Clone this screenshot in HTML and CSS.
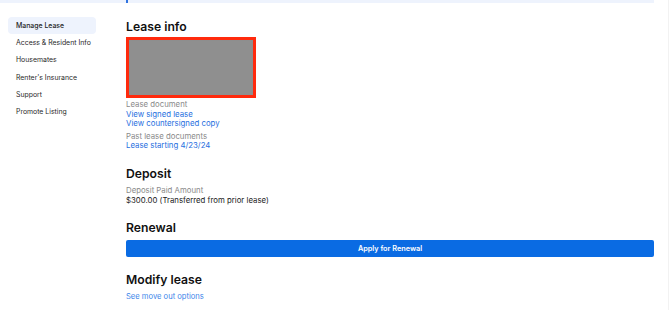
FILE: index.html
```html
<!DOCTYPE html>
<html>
<head>
<meta charset="utf-8">
<link rel="stylesheet" href="styles.css">
</head>
<body>
<div class="topbar"><span class="dot"></span></div>
<div class="page">
  <nav class="sidebar">
    <div class="nav-item active">Manage Lease</div>
    <div class="nav-item">Access &amp; Resident Info</div>
    <div class="nav-item">Housemates</div>
    <div class="nav-item">Renter's Insurance</div>
    <div class="nav-item">Support</div>
    <div class="nav-item">Promote Listing</div>
  </nav>
  <main class="main">
    <h2 class="heading first">Lease info</h2>
    <div class="lease-image"><div class="lease-image-inner"></div></div>
    <div class="group docs">
      <div class="label">Lease document</div>
      <a class="link">View signed lease</a>
      <a class="link">View countersigned copy</a>
    </div>
    <div class="group past">
      <div class="label">Past lease documents</div>
      <a class="link">Lease starting 4/23/24</a>
    </div>
    <h2 class="heading">Deposit</h2>
    <div class="group deposit">
      <div class="label">Deposit Paid Amount</div>
      <div class="value">$300.00 (Transferred from prior lease)</div>
    </div>
    <h2 class="heading">Renewal</h2>
    <button class="btn-primary">Apply for Renewal</button>
    <h2 class="heading">Modify lease</h2>
    <a class="link small">See move out options</a>
  </main>
</div>
</body>
</html>
```
FILE: styles.css
```css
html, body {
  margin: 0;
  padding: 0;
  background: #ffffff;
}
body {
  font-family: Inter, "Noto Sans", sans-serif;
  color: #1a1a1a;
  width: 670px;
  height: 310px;
  overflow: hidden;
  position: relative;
}
body::after {
  content: "";
  position: absolute;
  top: 0;
  right: 1px;
  width: 1px;
  height: 100%;
  background: #f2f2f2;
}
.topbar {
  width: 654px;
  height: 3px;
  background: #eef3fd;
  display: flex;
  padding-left: 126px;
  box-sizing: border-box;
}
.dot {
  width: 2px;
  height: 3px;
  background: #2f73e0;
}
.page {
  display: flex;
  gap: 30px;
  padding-left: 8px;
  width: 654px;
  box-sizing: border-box;
}
.sidebar {
  width: 88px;
  flex: none;
  display: flex;
  flex-direction: column;
  padding-top: 14px;
}
.nav-item {
  height: 17.2px;
  line-height: 17px;
  font-size: 6.9px;
  font-weight: 400;
  padding-left: 8px;
  color: #2a2a2a;
  border-radius: 4px;
  white-space: nowrap;
}
.nav-item.active {
  background: #eef3fd;
  color: #1f1f1f;
  font-weight: 500;
}
.main {
  flex: none;
  width: 528px;
  display: flex;
  flex-direction: column;
  align-items: flex-start;
  padding-top: 14px;
}
.heading {
  margin: 13px 0 0 0;
  font-size: 12.2px;
  line-height: 20px;
  font-weight: 600;
  color: #111111;
}
.heading.first {
  margin-top: 0;
}
.lease-image {
  margin-top: 0;
  width: 130px;
  height: 61px;
  box-sizing: border-box;
  border: 3px solid #ff2a0d;
  background: #8e8e8e;
  padding: 1px;
}
.lease-image-inner {
  width: 100%;
  height: 100%;
  background: #8f8f8f;
}
.group {
  display: flex;
  flex-direction: column;
  font-size: 7.8px;
  line-height: 9.6px;
}
.docs { margin-top: 2px; }
.past { margin-top: 3px; }
.deposit { margin-top: 1px; line-height: 10px; }
.label {
  color: #8a8a8a;
}
.link {
  color: #1f6fe0;
  text-decoration: none;
}
.value {
  color: #1a1a1a;
}
.btn-primary {
  margin-top: 2px;
  width: 528px;
  height: 17px;
  border: none;
  border-radius: 2px;
  background: #0a6be3;
  color: #ffffff;
  font-family: inherit;
  font-size: 7.3px;
  font-weight: 600;
  padding: 0;
  cursor: pointer;
}
.link.small {
  margin-top: 2px;
  font-size: 7.6px;
  line-height: 10px;
  color: #3d86ea;
}
```
